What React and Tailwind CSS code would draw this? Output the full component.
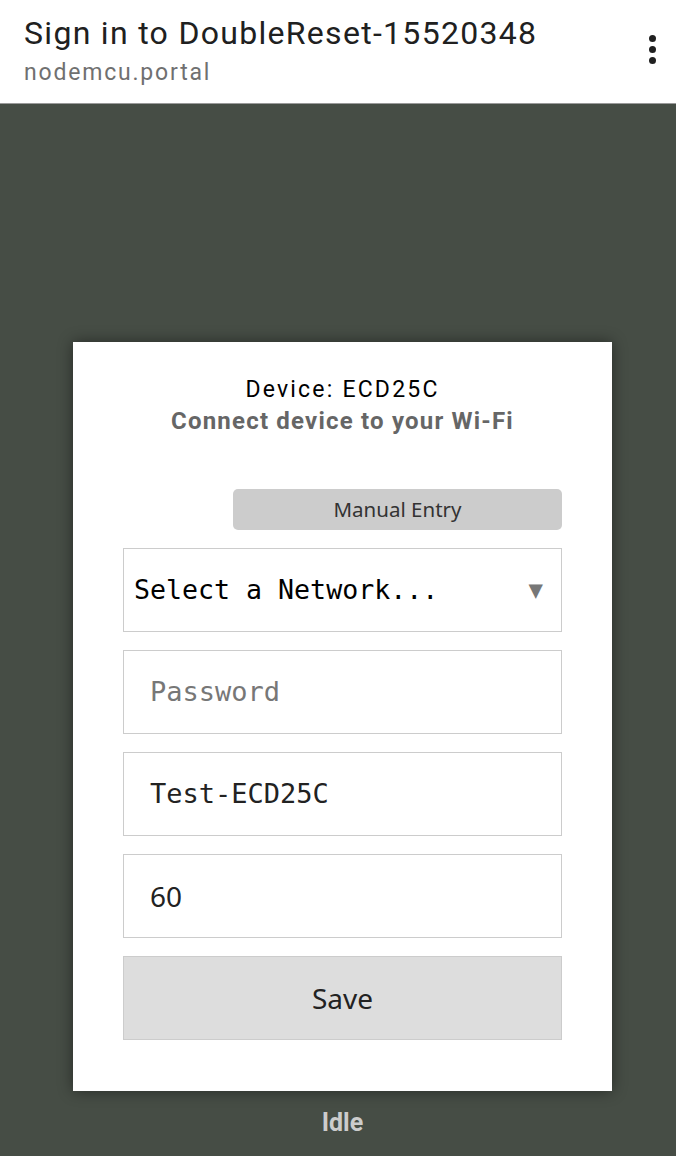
export default function App() {
  return (
    <div className="w-[676px] h-[1156px] flex flex-col bg-[#464d45] overflow-hidden" style={{ fontFamily: "Roboto, sans-serif" }}>
      {/* browser-ish header */}
      <div className="h-[104px] bg-white border-b border-[#9a9a9a] flex items-start justify-between pl-6 pr-4 shrink-0">
        <div className="pt-[13px]">
          <div className="text-[32px] leading-[40px] tracking-[1.3px] text-[#202020]">Sign in to DoubleReset-15520348</div>
          <div className="text-[23px] leading-[30px] tracking-[1.8px] text-[#707070] mt-[5px]">nodemcu.portal</div>
        </div>
        <div className="flex flex-col gap-[4px] items-center pt-[35px] pr-[4px]">
          <span className="w-[7px] h-[7px] rounded-full bg-[#202020]" />
          <span className="w-[7px] h-[7px] rounded-full bg-[#202020]" />
          <span className="w-[7px] h-[7px] rounded-full bg-[#202020]" />
        </div>
      </div>

      <div className="flex flex-col items-center pt-[238px] pl-[9px]">
        <div className="w-[539px] bg-white shadow-[0_0_14px_rgba(0,0,0,0.45)] pt-[33px] pb-[51px] px-[50px] flex flex-col">
          <div className="text-center text-[23px] leading-[30px] tracking-[2.2px] text-black">Device: ECD25C</div>
          <div className="text-center text-[24px] leading-[32px] tracking-[1.2px] font-bold text-[#666666]">Connect device to your Wi-Fi</div>

          <div className="flex justify-end mt-[52px]">
            <button className="w-[329px] h-[41px] rounded-[5px] bg-[#cccccc] text-[20.5px] text-[#333333]" style={{ fontFamily: "'Noto Sans', sans-serif" }}>
              Manual Entry
            </button>
          </div>

          <div className="flex flex-col gap-[18px] mt-[18px]" style={{ fontFamily: "'DejaVu Sans Mono', monospace" }}>
            <div className="h-[84px] border border-[#cccccc] flex items-center justify-between pl-[10px] pr-[18px]">
              <span className="text-[26.6px] text-black">Select a Network...</span>
              <span className="text-[24px] text-[#777777]">▼</span>
            </div>
            <div className="h-[84px] border border-[#cccccc] flex items-center pl-[26px]">
              <span className="text-[27px] text-[#777777]">Password</span>
            </div>
            <div className="h-[84px] border border-[#cccccc] flex items-center pl-[26px]">
              <span className="text-[27px] text-[#222222]">Test-ECD25C</span>
            </div>
            <div className="h-[84px] border border-[#cccccc] flex items-center pl-[26px]">
              <span className="text-[28px] text-[#222222]" style={{ fontFamily: "'Noto Sans', sans-serif" }}>60</span>
            </div>
            <button className="h-[84px] border border-[#cccccc] bg-[#dddddd] text-[28px] text-[#222222]" style={{ fontFamily: "'Noto Sans', sans-serif" }}>
              Save
            </button>
          </div>
        </div>
        <div className="text-[25px] leading-[30px] font-bold text-[#cccccc] mt-[17px]">Idle</div>
      </div>
    </div>
  );
}
